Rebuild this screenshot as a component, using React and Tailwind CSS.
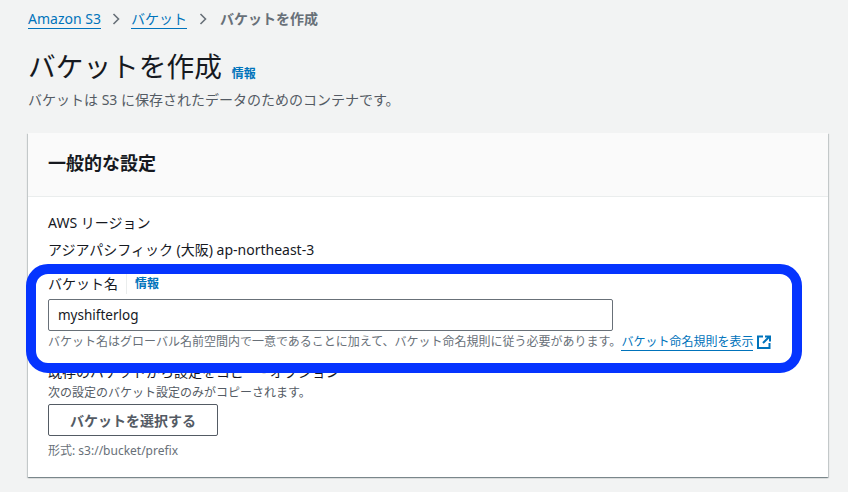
const font = { fontFamily: '"Noto Sans", "Noto Sans CJK JP", sans-serif' };

function Chevron() {
  return (
    <svg width="12" height="14" viewBox="0 0 12 14" fill="none" stroke="#687078" strokeWidth="1.6" className="shrink-0">
      <path d="M3.5 2l5 5-5 5" />
    </svg>
  );
}

export default function App() {
  return (
    <div style={font} className="relative h-[492px] w-[848px] overflow-hidden bg-[#f2f3f3] px-7 pt-[9px] text-[#16191f]">
      <nav className="flex h-5 items-center text-[14px] leading-5">
        <a className="border-b border-[#0073bb] leading-[18px] text-[#0073bb]">Amazon S3</a>
        <span className="mx-[9px]"><Chevron /></span>
        <a className="border-b border-[#0073bb] leading-[18px] text-[#0073bb]">バケット</a>
        <span className="ml-[10px] mr-[11px]"><Chevron /></span>
        <span className="font-bold text-[#687078]">バケットを作成</span>
      </nav>

      <div className="mt-[18px] flex items-end">
        <h1 className="text-[27.7px] font-normal leading-[38px]">バケットを作成</h1>
        <a className="mb-[3px] ml-[10px] text-[12px] font-bold leading-4 text-[#0073bb]">情報</a>
      </div>
      <p className="mt-[5px] text-[14px] leading-5 text-[#545b64]">バケットは S3 に保存されたデータのためのコンテナです。</p>

      <section className="mt-[23px] h-[344px] w-[800px] bg-white shadow-[0_1px_1px_0_rgba(0,28,36,0.3),1px_1px_1px_0_rgba(0,28,36,0.15),-1px_1px_1px_0_rgba(0,28,36,0.15)]">
        <header className="flex h-[64px] items-center border-b border-[#eaeded] bg-[#fafafa] px-5 pb-1">
          <h2 className="text-[18px] font-bold leading-6">一般的な設定</h2>
        </header>
        <div className="px-5 pt-[16px]">
          <div className="text-[14px] leading-5">AWS リージョン</div>
          <div className="mt-[7px] text-[14px] leading-5">アジアパシフィック (大阪) ap-northeast-3</div>

          <div className="mt-[14px] flex h-[20px] items-center text-[14px] leading-5">
            <span>バケット名</span>
            <span className="ml-[8px] border-l border-[#eaeded] pl-2 text-[12px] font-bold leading-5 text-[#0073bb]">情報</span>
          </div>
          <div className="mt-[5px] flex h-[32px] w-[565px] items-center rounded-[2px] border border-[#687078] bg-white px-[9px] text-[13.5px]">myshifterlog</div>
          <div className="mt-[2px] flex h-[18px] items-center whitespace-nowrap text-[12px] leading-[18px] text-[#687078]">
            <span>バケット名はグローバル名前空間内で一意であることに加えて、バケット命名規則に従う必要があります。</span>
            <a className="border-b border-[#0073bb] leading-[16px] text-[#0073bb]">バケット命名規則を表示</a>
            <svg width="14" height="14" viewBox="0 0 14 14" fill="none" stroke="#0073bb" strokeWidth="2" className="ml-[4px] shrink-0">
              <path d="M6 1.5H1v11.5h11.5V8" />
              <path d="M6 8l6-6M8 1.5h5v5" />
            </svg>
          </div>

          <div className="mt-[12px] text-[14px] leading-[18px]">既存のバケットから設定をコピー - オプション</div>
          <div className="mt-[3px] text-[12px] leading-[18px] text-[#545b64]">次の設定のバケット設定のみがコピーされます。</div>
          <button className="mt-[2px] block h-[32px] w-[170px] rounded-[2px] border border-[#545b64] bg-white text-[14px] font-bold text-[#545b64]">バケットを選択する</button>
          <div className="mt-[6px] text-[12px] leading-[18px] text-[#687078]">形式: s3://bucket/prefix</div>
        </div>
      </section>

      <div className="pointer-events-none absolute left-[26px] top-[264px] h-[109px] w-[776px] rounded-[22px] border-[10px] border-[#0534ff]" />
    </div>
  );
}
